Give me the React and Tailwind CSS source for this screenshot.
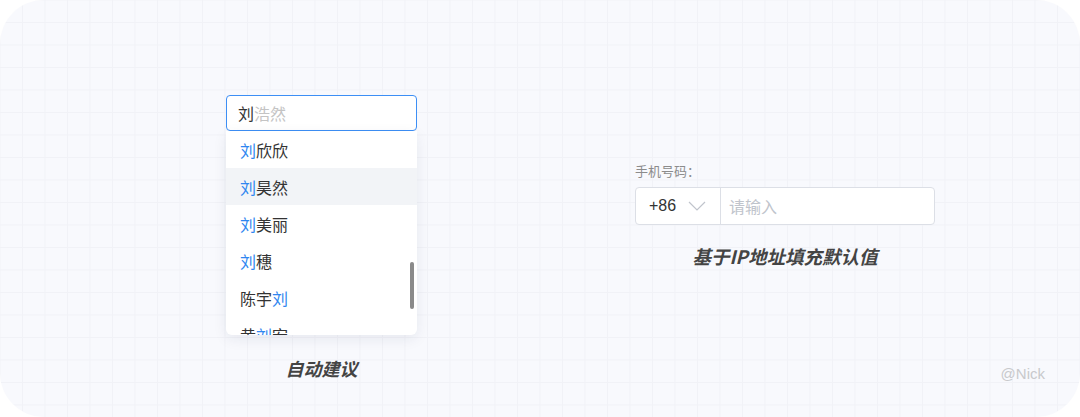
import React from 'react'

const cjk = { fontFamily: '"Noto Sans CJK SC", "Noto Sans", sans-serif' }
const latin = { fontFamily: '"Liberation Sans", "Noto Sans CJK SC", sans-serif' }

const options = [
  { pre: '', hit: '刘', post: '欣欣' },
  { pre: '', hit: '刘', post: '昊然', active: true },
  { pre: '', hit: '刘', post: '美丽' },
  { pre: '', hit: '刘', post: '穗' },
  { pre: '陈宇', hit: '刘', post: '' },
  { pre: '黄', hit: '刘', post: '宏' },
]

function Suggest() {
  return (
    <div className="w-[191px] flex flex-col items-stretch">
      <div className="h-[36px] rounded-[4px] border-[1.5px] border-[#3d8ff5] bg-white flex items-center px-[11px] text-[16px]">
        <span className="text-[#333]">刘</span>
        <span className="text-[#c4c4c4]">浩然</span>
      </div>
      <div className="relative h-[204px] overflow-hidden rounded-b-[6px] bg-white shadow-[0_4px_14px_rgba(30,40,80,0.08)]">
        {options.map((o, i) => (
          <div
            key={i}
            className={`h-[37px] flex items-center px-[14px] text-[16px] text-[#333] ${o.active ? 'bg-[#f2f4f7]' : ''}`}
          >
            {o.pre}
            <span className="text-[#2f86f0]">{o.hit}</span>
            {o.post}
          </div>
        ))}
        <div className="absolute right-[3px] top-[131px] w-[4px] h-[47px] rounded-full bg-[#8a8a8a]" />
      </div>
      <div className="mt-[20px] text-center text-[18px] font-bold italic text-[#444]">自动建议</div>
    </div>
  )
}

function PhoneField() {
  return (
    <div className="w-[300px] pt-[161px] flex flex-col">
      <div className="text-[13px] text-[#8c8c8c] leading-[20px]">手机号码：</div>
      <div className="mt-[6px] h-[38px] rounded-[4px] border border-[#dcdfe6] bg-white flex items-stretch">
        <div className="w-[85px] border-r border-[#dcdfe6] flex items-center pl-[13px] pr-[8px] justify-between">
          <span className="text-[16px] text-[#333]" style={latin}>+86</span>
          <svg width="18" height="10" viewBox="0 0 18 10" fill="none" className="mr-[6px]">
            <path d="M1 1l8 8 8-8" stroke="#c0c4cc" strokeWidth="1.2" />
          </svg>
        </div>
        <div className="flex items-center pl-[8px] text-[16px] text-[#c0c4cc]">请输入</div>
      </div>
      <div className="mt-[18px] text-center text-[18.5px] font-bold italic text-[#444]">基于IP地址填充默认值</div>
    </div>
  )
}

export default function App() {
  return (
    <div className="w-[1080px] h-[417px] bg-white" style={cjk}>
      <div
        className="relative w-full h-full rounded-[44px] bg-[#f8f9fd] bg-[linear-gradient(to_right,#f1f2f7_1px,transparent_1px),linear-gradient(to_bottom,#f1f2f7_1px,transparent_1px)] bg-[size:22.5px_22.5px] bg-[position:22px_22px] flex items-start pl-[226px] pt-[95px]"
      >
        <Suggest />
        <div className="ml-[218px] -mt-[95px]">
          <PhoneField />
        </div>
        <div className="absolute right-[35px] bottom-[32px] text-[15px] text-[#c8c9cc]" style={latin}>@Nick</div>
      </div>
    </div>
  )
}
